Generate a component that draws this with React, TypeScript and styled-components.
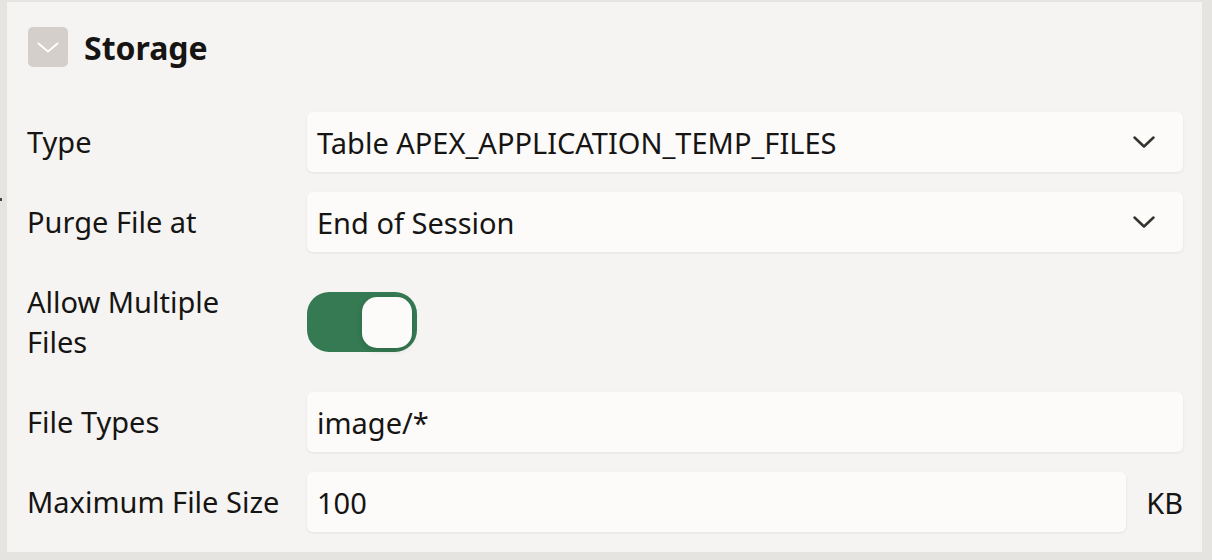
import React from "react";
import styled, { createGlobalStyle } from "styled-components";

const Global = createGlobalStyle`
  html, body { margin: 0; padding: 0; background: #e6e4e0; }
  body { font-family: "Noto Sans", "Open Sans", sans-serif; color: #161513; }
`;

const Page = styled.div`
  width: 1212px;
  height: 560px;
  box-sizing: border-box;
  padding: 2px 10px 8px 7px;
  background: #e6e4e0;
  position: relative;
`;

const Handle = styled.span`
  position: absolute;
  left: 0;
  top: 198px;
  width: 2px;
  height: 3px;
  background: #444;
`;

const Panel = styled.section`
  height: 550px;
  box-sizing: border-box;
  background: #f5f4f2;
  padding: 25px 19px 0 20px;
`;

const Header = styled.div`
  display: flex;
  align-items: center;
  gap: 16px;
  height: 40px;
  margin-bottom: 35px;
`;

const Toggle = styled.button`
  width: 40px;
  height: 40px;
  border: none;
  border-radius: 5px;
  background: #d4cfcb;
  display: flex;
  align-items: center;
  justify-content: center;
  padding: 0;
  margin-left: 1px;
`;

const Title = styled.h2`
  margin: 0;
  font-size: 32px;
  font-weight: 700;
  color: #161513;
`;

const Form = styled.div`
  display: flex;
  flex-direction: column;
`;

const Row = styled.div`
  display: grid;
  grid-template-columns: 280px 1fr;
  align-items: center;
  padding: 10px 0;
`;

const Label = styled.label`
  font-size: 29px;
  line-height: 40px;
  color: #161513;
  max-width: 257px;
  padding: 10px 0;
`;

const Field = styled.div<{ $grow?: boolean }>`
  height: 60px;
  box-sizing: border-box;
  background: #fcfbfa;
  border-radius: 6px;
  box-shadow: 0 1px 3px rgba(0, 0, 0, 0.08);
  display: flex;
  align-items: center;
  justify-content: space-between;
  padding: 0 28px 0 10px;
  font-size: 29px;
  color: #161513;
  flex: ${(p) => (p.$grow ? 1 : "initial")};
`;

const FieldWithUnit = styled.div`
  display: flex;
  align-items: center;
  gap: 20px;
`;

const Unit = styled.span`
  font-size: 29px;
  color: #161513;
`;

const Switch = styled.div<{ $on: boolean }>`
  width: 110px;
  height: 60px;
  box-sizing: border-box;
  border-radius: 22px;
  background: ${(p) => (p.$on ? "#357a52" : "#c8c4bf")};
  display: flex;
  align-items: center;
  justify-content: ${(p) => (p.$on ? "flex-end" : "flex-start")};
  padding: 4px 5px;
`;

const Knob = styled.span`
  width: 50px;
  height: 51px;
  border-radius: 15px;
  background: #fcfbfa;
  box-shadow: 0 2px 6px rgba(0, 0, 0, 0.15);
`;

const Chevron = ({ color, w = 22, h = 12, sw = 2.5 }: { color: string; w?: number; h?: number; sw?: number }) => (
  <svg width={w} height={h} viewBox={`0 0 ${w} ${h}`} fill="none">
    <polyline
      points={`1.5,1.5 ${w / 2},${h - 1.5} ${w - 1.5},1.5`}
      stroke={color}
      strokeWidth={sw}
      strokeLinecap="round"
      strokeLinejoin="round"
    />
  </svg>
);

export default function App() {
  return (
    <>
      <Global />
      <Page>
        <Handle />
        <Panel>
          <Header>
            <Toggle aria-label="Collapse">
              <Chevron color="#ffffff" w={22} h={11} sw={2} />
            </Toggle>
            <Title>Storage</Title>
          </Header>
          <Form>
            <Row>
              <Label>Type</Label>
              <Field>
                <span>Table APEX_APPLICATION_TEMP_FILES</span>
                <Chevron color="#35332f" />
              </Field>
            </Row>
            <Row>
              <Label>Purge File at</Label>
              <Field>
                <span>End of Session</span>
                <Chevron color="#35332f" />
              </Field>
            </Row>
            <Row>
              <Label>Allow Multiple Files</Label>
              <div>
                <Switch $on>
                  <Knob />
                </Switch>
              </div>
            </Row>
            <Row>
              <Label>File Types</Label>
              <Field>
                <span>image/*</span>
              </Field>
            </Row>
            <Row>
              <Label>Maximum File Size</Label>
              <FieldWithUnit>
                <Field $grow>
                  <span>100</span>
                </Field>
                <Unit>KB</Unit>
              </FieldWithUnit>
            </Row>
          </Form>
        </Panel>
      </Page>
    </>
  );
}
